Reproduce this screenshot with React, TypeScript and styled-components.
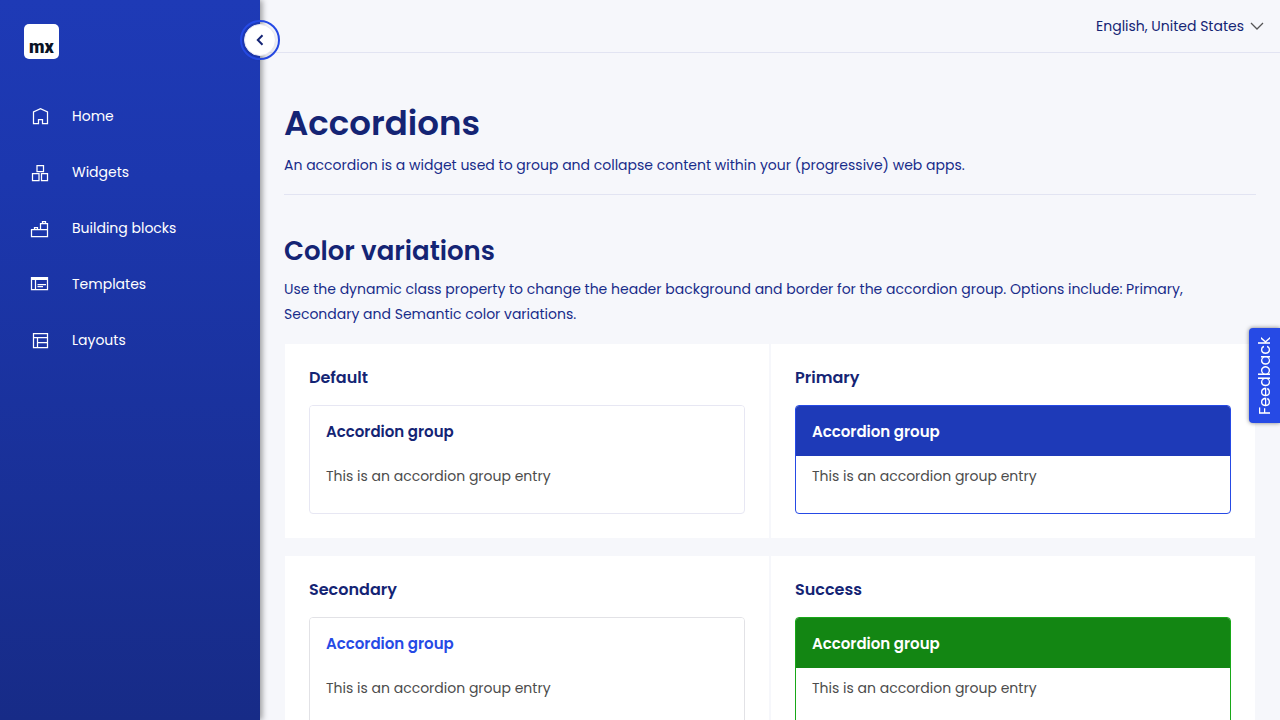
import React, { useState } from "react";
import styled, { createGlobalStyle, css } from "styled-components";

const GlobalStyle = createGlobalStyle`
  *, *::before, *::after { box-sizing: border-box; }
  body {
    margin: 0;
    background: #f6f7fb;
    color: #142474;
    font-family: Poppins, Inter, "Open Sans", sans-serif;
    font-size: 14px;
    line-height: 25px;
  }
  button, select { font: inherit; color: inherit; }
`;

const Shell = styled.div`
  display: flex;
  height: 100vh;
`;

const Sidebar = styled.aside`
  position: relative;
  z-index: 2;
  flex: 0 0 260px;
  padding: 24px 0;
  background: linear-gradient(180deg, #1e3ab6 0%, #1c37ae 25%, #172b87 100%);
  box-shadow: 2px 0 6px rgba(0, 0, 0, 0.4);
`;

const Logo = styled.a`
  display: flex;
  align-items: flex-end;
  justify-content: center;
  width: 35px;
  height: 35px;
  margin-left: 24px;
  padding-bottom: 3px;
  border-radius: 5px;
  background: #fff;
  color: #0a1325;
  font-family: Roboto, sans-serif;
  font-size: 18px;
  font-weight: 900;
  line-height: 18px;
  text-decoration: none;
`;

const Toggle = styled.button`
  position: absolute;
  top: 20px;
  right: -20px;
  display: flex;
  align-items: center;
  justify-content: center;
  width: 40px;
  height: 40px;
  padding: 2px;
  border: 2px solid #264ae5;
  border-radius: 50%;
  background: transparent;
  cursor: pointer;
`;

const ToggleFace = styled.span`
  display: flex;
  align-items: center;
  justify-content: center;
  width: 32px;
  height: 32px;
  border: 1px solid #e7e7f3;
  border-radius: 50%;
  background: #fff;
  box-shadow: 0 2px 4px rgba(0, 0, 0, 0.1);
`;

const Nav = styled.nav`
  display: flex;
  flex-direction: column;
  margin-top: 29px;
`;

const NavLink = styled.a`
  display: flex;
  align-items: center;
  gap: 20px;
  height: 56px;
  padding: 0 28px;
  color: #fff;
  text-decoration: none;
`;

const Main = styled.div`
  flex: 1;
  min-width: 0;
  overflow-y: auto;
  scrollbar-width: none;
`;

const TopBar = styled.header`
  display: flex;
  align-items: center;
  justify-content: flex-end;
  height: 53px;
  padding: 0 16px;
  border-bottom: 1px solid #e2e4f2;
`;

const LanguageField = styled.label`
  position: relative;
  display: flex;
  align-items: center;
`;

const LanguageSelect = styled.select`
  appearance: none;
  height: 32px;
  padding: 0 20px 0 0;
  border: 0;
  background: transparent;
  text-align-last: right;
  cursor: pointer;
`;

const SelectArrow = styled.svg`
  position: absolute;
  right: 0;
  pointer-events: none;
`;

const Content = styled.main`
  padding: 48px 24px 24px;
`;

const PageHeader = styled.header`
  padding-bottom: 16px;
  border-bottom: 1px solid #e2e4f2;
`;

const PageTitle = styled.h1`
  margin: 0 0 7px;
  font-size: 34px;
  font-weight: 600;
  line-height: 45px;
`;

const SectionTitle = styled.h2`
  margin: 38px 0 8px;
  font-size: 26px;
  font-weight: 600;
  line-height: 36px;
`;

const Text = styled.p`
  margin: 0;
  color: #182c8a;
`;

const CardGrid = styled.div`
  display: grid;
  grid-template-columns: 1fr 1fr;
  gap: 18px 2px;
  margin-top: 17px;
  padding: 0 1px;
`;

const Card = styled.section`
  padding: 22px 24px 24px;
  background: #fff;
`;

const CardTitle = styled.h3`
  margin: 0 0 15px;
  font-size: 16px;
  font-weight: 600;
  line-height: 24px;
`;

type Tone = "default" | "primary" | "secondary" | "success";

const tones: Record<Tone, { header: string; text: string; border: string }> = {
  default: { header: "#fff", text: "#142474", border: "#e7e7f3" },
  primary: { header: "#1e3ab8", text: "#fff", border: "#264ae5" },
  secondary: { header: "#fff", text: "#264ae5", border: "#e2e2e6" },
  success: { header: "#138613", text: "#fff", border: "#18a818" },
};

const Group = styled.div<{ $tone: Tone }>`
  overflow: hidden;
  border: 1px solid ${(p) => tones[p.$tone].border};
  border-radius: 4px;
`;

const GroupHeader = styled.button<{ $tone: Tone }>`
  display: block;
  width: 100%;
  height: 50px;
  padding: 0 16px;
  border: 0;
  text-align: left;
  font-size: 15px;
  font-weight: 600;
  cursor: pointer;
  ${(p) => css`
    background: ${tones[p.$tone].header};
    color: ${tones[p.$tone].text};
  `}
`;

const GroupBody = styled.div`
  padding: 8px 16px 24px;
  color: #4c4c4c;
`;

const Feedback = styled.button`
  position: fixed;
  z-index: 3;
  top: 328px;
  right: 0;
  width: 31px;
  height: 95px;
  padding: 0;
  border: 0;
  border-radius: 0 4px 4px 0;
  background: #264ae5;
  box-shadow: 0 0 4px rgba(0, 0, 0, 0.5);
  color: #fff;
  font-size: 16px;
  line-height: 31px;
  writing-mode: vertical-rl;
  transform: rotate(180deg);
  cursor: pointer;
`;

const NavIcon = ({ children }: { children: React.ReactNode }) => (
  <svg width="24" height="24" viewBox="0 0 24 24" fill="none" stroke="#fff" strokeWidth="1.25" aria-hidden="true">
    {children}
  </svg>
);

const navItems = [
  { label: "Home", icon: <path d="M5.5 19.5V8L12.5 4.8L19.5 8V19.5H14.5V15.5H10.5V19.5Z" /> },
  { label: "Widgets", icon: <path d="M9 5.5H15.5V11.5H9ZM4.5 13.5H11V20.5H4.5ZM13.5 13.5H19.5V20.5H13.5Z" /> },
  {
    label: "Building blocks",
    icon: <path d="M3.5 13.5H19.5V20.5H3.5ZM12.5 13.5V7.5H19.5V13.5M14.5 7.5V5.5H17.5V7.5M6.5 13.5V11.5H9.5V13.5" />,
  },
  {
    label: "Templates",
    icon: (
      <>
        <path d="M3.5 5.5H19.5V17.5H3.5ZM7.5 7V17.5M9.5 12.5H18M9.5 14.5H15" />
        <path d="M3 5H20V8H3Z" fill="#fff" stroke="none" />
      </>
    ),
  },
  { label: "Layouts", icon: <path d="M5.5 5.5H19.5V19.5H5.5ZM5.5 9.5H19.5M9.5 9.5V19.5M9.5 14.5H19.5" /> },
];

const variations: { title: string; tone: Tone }[] = [
  { title: "Default", tone: "default" },
  { title: "Primary", tone: "primary" },
  { title: "Secondary", tone: "secondary" },
  { title: "Success", tone: "success" },
];

function AccordionGroup({ tone }: { tone: Tone }) {
  const [open, setOpen] = useState(true);
  return (
    <Group $tone={tone}>
      <GroupHeader $tone={tone} type="button" aria-expanded={open} onClick={() => setOpen(!open)}>
        Accordion group
      </GroupHeader>
      {open && <GroupBody>This is an accordion group entry</GroupBody>}
    </Group>
  );
}

export default function App() {
  return (
    <>
      <GlobalStyle />
      <Shell>
        <Sidebar>
          <Logo href="#">mx</Logo>
          <Nav>
            {navItems.map((item) => (
              <NavLink href="#" key={item.label}>
                <NavIcon>{item.icon}</NavIcon>
                {item.label}
              </NavLink>
            ))}
          </Nav>
          <Toggle type="button" aria-label="Toggle sidebar">
            <ToggleFace>
              <svg width="12" height="12" viewBox="0 0 12 12" fill="none" stroke="#142474" strokeWidth="2" aria-hidden="true">
                <path d="M8.5 1.2L3.8 6L8.5 10.8" />
              </svg>
            </ToggleFace>
          </Toggle>
        </Sidebar>
        <Main>
          <TopBar>
            <LanguageField>
              <LanguageSelect aria-label="Language">
                <option>English, United States</option>
              </LanguageSelect>
              <SelectArrow width="14" height="8" viewBox="0 0 14 8" fill="none" stroke="#555" strokeWidth="1.25" aria-hidden="true">
                <path d="M1 1L7 7L13 1" />
              </SelectArrow>
            </LanguageField>
          </TopBar>
          <Content>
            <PageHeader>
              <PageTitle>Accordions</PageTitle>
              <Text>An accordion is a widget used to group and collapse content within your (progressive) web apps.</Text>
            </PageHeader>
            <SectionTitle>Color variations</SectionTitle>
            <Text>
              Use the dynamic class property to change the header background and border for the accordion group. Options
              include: Primary, Secondary and Semantic color variations.
            </Text>
            <CardGrid>
              {variations.map((v) => (
                <Card key={v.title}>
                  <CardTitle>{v.title}</CardTitle>
                  <AccordionGroup tone={v.tone} />
                </Card>
              ))}
            </CardGrid>
          </Content>
        </Main>
      </Shell>
      <Feedback type="button">Feedback</Feedback>
    </>
  );
}
